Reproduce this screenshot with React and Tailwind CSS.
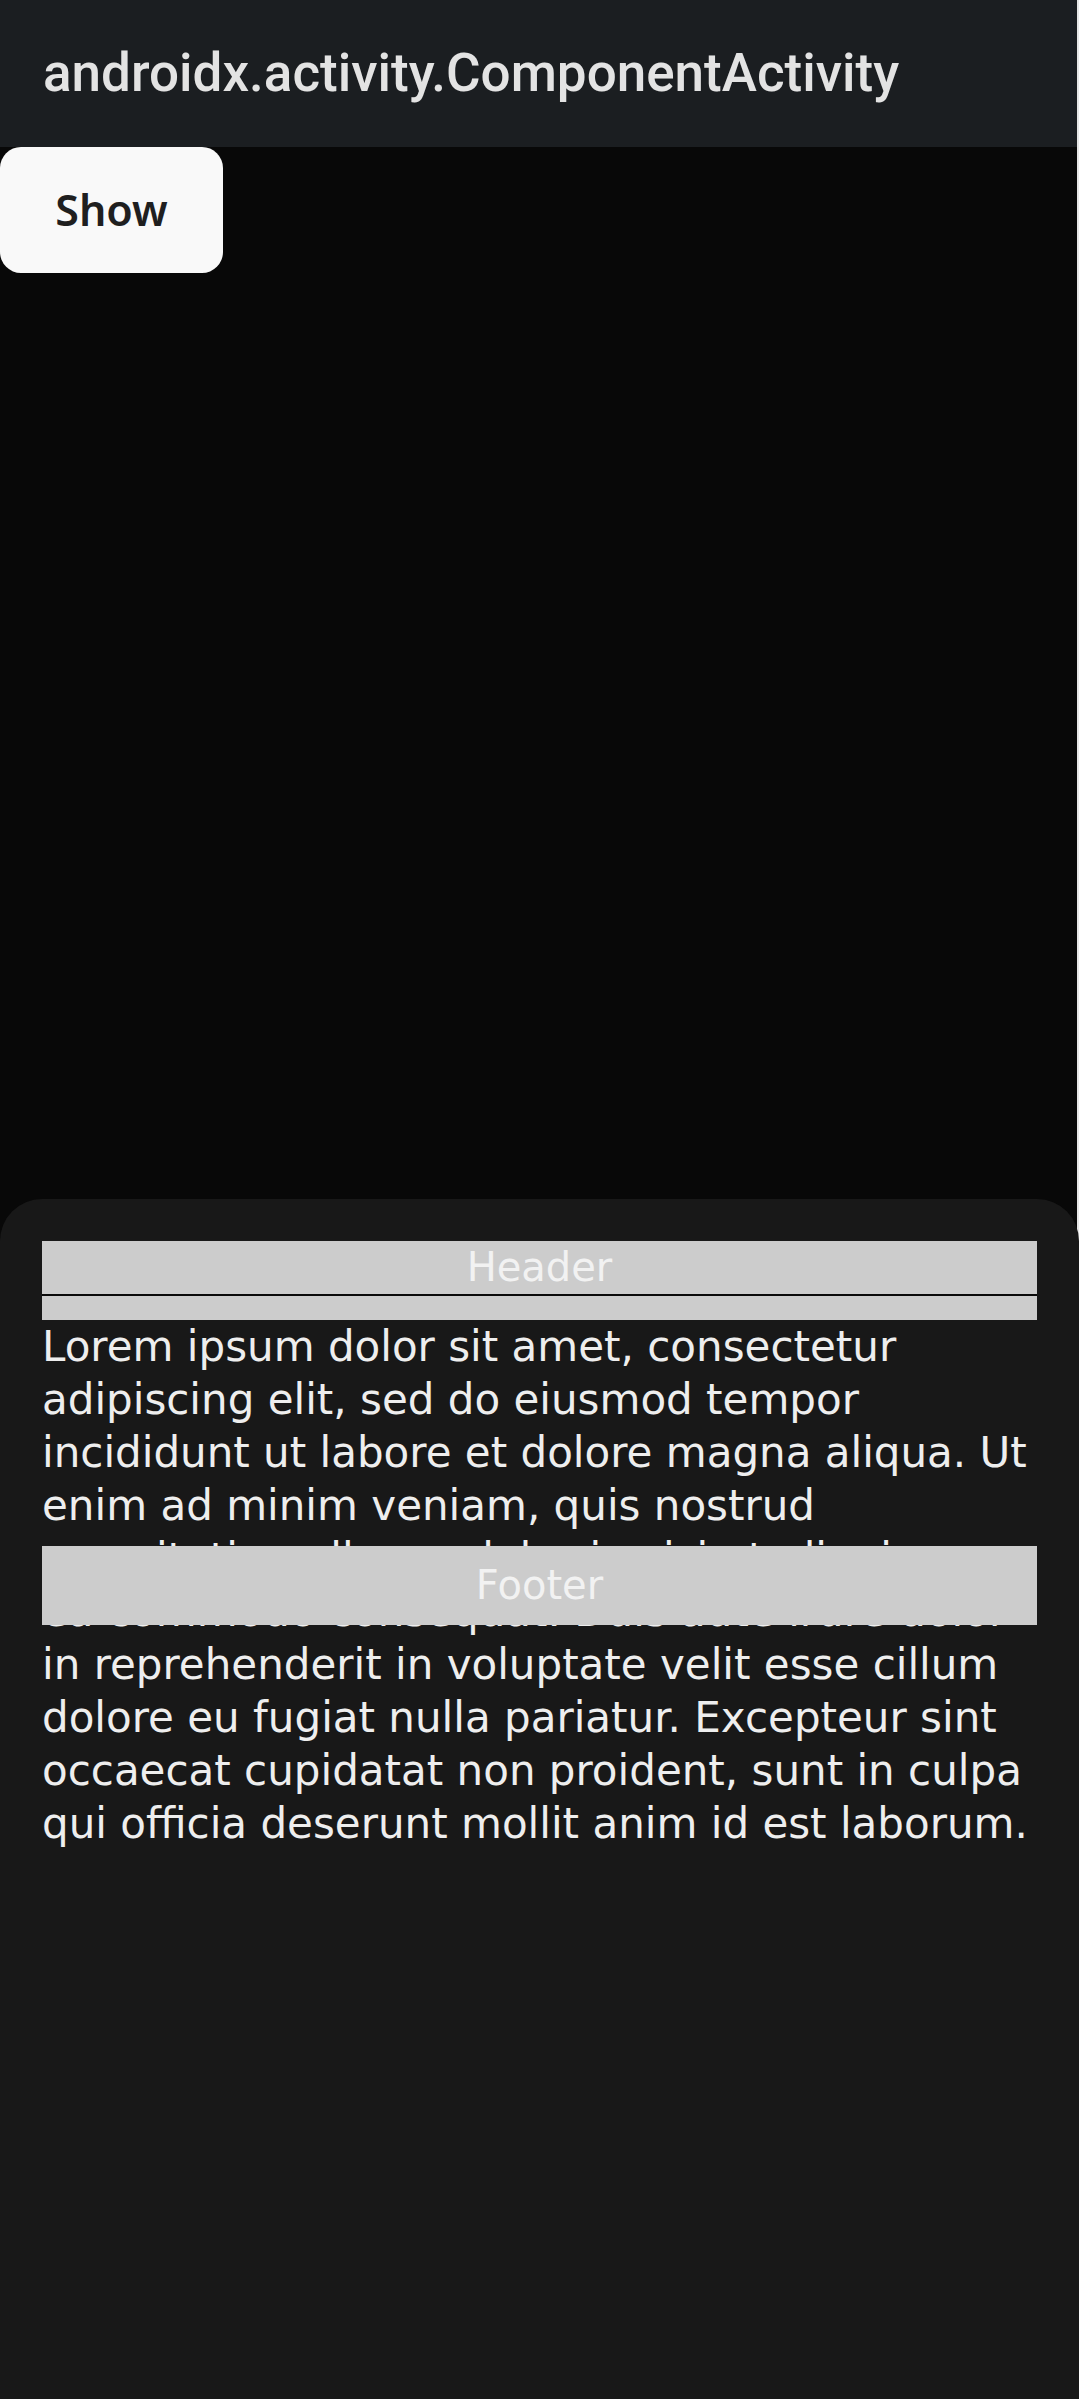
import React from 'react';

const lines = [
  'Lorem ipsum dolor sit amet, consectetur',
  'adipiscing elit, sed do eiusmod tempor',
  'incididunt ut labore et dolore magna aliqua. Ut',
  'enim ad minim veniam, quis nostrud',
  'exercitation ullamco laboris nisi ut aliquip ex',
  'ea commodo consequat. Duis aute irure dolor',
  'in reprehenderit in voluptate velit esse cillum',
  'dolore eu fugiat nulla pariatur. Excepteur sint',
  'occaecat cupidatat non proident, sunt in culpa',
  'qui officia deserunt mollit anim id est laborum.',
];

export default function App() {
  return (
    <div className="w-full h-[2399px] bg-[#e6e6e6] flex flex-col overflow-hidden">
      {/* toolbar */}
      <div className="w-[1077px] h-[147px] shrink-0 bg-[#1b1e21] flex items-center pl-[43px]">
        <h1 className="text-[53px] font-medium text-[#e3e3e3] font-['Roboto',sans-serif]">
          androidx.activity.ComponentActivity
        </h1>
      </div>

      {/* content + sheet */}
      <div className="w-[1077px] flex-1 bg-[#080808] flex flex-col">
        <div className="flex-1">
          <button className="w-[223px] h-[126px] rounded-[21px] bg-[#f9f9f9] text-[#1f1f1f] text-[43px] font-semibold font-['Noto_Sans',sans-serif] flex items-center justify-center">
            Show
          </button>
        </div>

        {/* bottom sheet */}
        <div className="relative w-[1079px] h-[1200px] shrink-0 bg-[#181818] rounded-t-[42px] px-[42px] pt-[42px] font-['DejaVu_Sans',sans-serif]">
          <div className="bg-[#cccccc] flex flex-col">
            <p className="text-center text-[40px] leading-[53px] text-[#f2f2f2]">Header</p>
            <div className="h-[2px] bg-[#0a0a0a]" />
            <div className="h-[24px]" />
          </div>

          <p className="text-[42px] leading-[53px] text-[#eeeeee] whitespace-nowrap">
            {lines.map((l, i) => (
              <span key={i} className="block">{l}</span>
            ))}
          </p>

          {/* footer sits over the text */}
          <div className="absolute top-[347px] left-[42px] right-[42px] bg-[#cccccc] py-[13px]">
            <p className="text-center text-[40px] leading-[53px] text-[#f2f2f2]">Footer</p>
          </div>
        </div>
      </div>
    </div>
  );
}
